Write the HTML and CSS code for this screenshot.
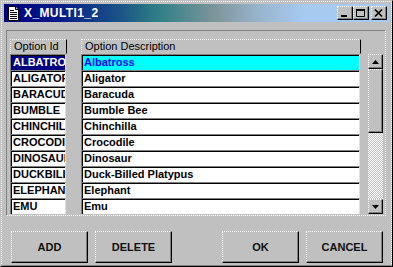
FILE: index.html
```html
<!DOCTYPE html>
<html lang="en">
<head>
    <meta charset="UTF-8">
    <title>X_MULTI1_2</title>
    <link rel="stylesheet" href="styles.css">
</head>
<body>
    <div class="window">
        <div class="frame">
            <div class="titlebar">
                <svg class="app-icon" width="11" height="15" viewBox="0 0 11 15">
                    <path d="M0.5 0.5h7l3 3v11h-10z" fill="#fff" stroke="#000"/>
                    <path d="M7.5 0.5v3h3" fill="#c0c0c0" stroke="#000"/>
                    <path d="M2 4.5h4M2 6.5h7M2 8.5h7M2 10.5h7M2 12.5h7" stroke="#000"/>
                </svg>
                <span class="title">X_MULTI1_2</span>
                <div class="caption-btns">
                    <button class="cap-btn">
                        <svg width="14" height="12" viewBox="0 0 14 12"><rect x="3" y="8" width="6" height="2" fill="#000"/></svg>
                    </button>
                    <button class="cap-btn">
                        <svg width="14" height="12" viewBox="0 0 14 12"><path d="M2.5 2.5h8v7h-8z" fill="none" stroke="#000"/><rect x="2" y="2" width="9" height="2" fill="#000"/></svg>
                    </button>
                    <button class="cap-btn close">
                        <svg width="14" height="12" viewBox="0 0 14 12"><path d="M3 2.5l7 7M10 2.5l-7 7" stroke="#000" stroke-width="1.7"/></svg>
                    </button>
                </div>
            </div>

            <div class="content">
                <div class="panel">
                    <div class="col col-id">
                        <div class="hdr">Option Id</div>
                        <div class="cell sel-id">ALBATROSS</div>
                        <div class="cell">ALIGATOR</div>
                        <div class="cell">BARACUDA</div>
                        <div class="cell">BUMBLE</div>
                        <div class="cell">CHINCHILLA</div>
                        <div class="cell">CROCODILE</div>
                        <div class="cell">DINOSAUR</div>
                        <div class="cell">DUCKBILLED</div>
                        <div class="cell">ELEPHANT</div>
                        <div class="cell">EMU</div>
                    </div>
                    <div class="col col-desc">
                        <div class="hdr">Option Description</div>
                        <div class="cell sel-desc">Albatross</div>
                        <div class="cell">Aligator</div>
                        <div class="cell">Baracuda</div>
                        <div class="cell">Bumble Bee</div>
                        <div class="cell">Chinchilla</div>
                        <div class="cell">Crocodile</div>
                        <div class="cell">Dinosaur</div>
                        <div class="cell">Duck-Billed Platypus</div>
                        <div class="cell">Elephant</div>
                        <div class="cell">Emu</div>
                    </div>
                    <div class="vscroll">
                        <div class="sb-btn">
                            <svg width="7" height="4" viewBox="0 0 7 4"><path d="M3.5 0L7 4H0z" fill="#000"/></svg>
                        </div>
                        <div class="sb-thumb"></div>
                        <div class="sb-track"></div>
                        <div class="sb-btn">
                            <svg width="7" height="4" viewBox="0 0 7 4"><path d="M0 0h7L3.5 4z" fill="#000"/></svg>
                        </div>
                    </div>
                </div>

                <div class="btn-row">
                    <button class="btn">ADD</button>
                    <button class="btn">DELETE</button>
                    <div class="spacer"></div>
                    <button class="btn">OK</button>
                    <button class="btn">CANCEL</button>
                </div>
            </div>
        </div>
    </div>
</body>
</html>
```

FILE: styles.css
```css
:root {
    --face: #c0c0c0;
    --shadow: #808080;
    --dark: #000000;
    --title-start: #000080;
    --title-end: #a6caf0;
}

* {
    margin: 0;
    padding: 0;
    box-sizing: border-box;
}

body {
    font-family: "Liberation Sans", Arial, sans-serif;
    background-color: var(--face);
    color: #000;
}

button {
    font-family: inherit;
    background: var(--face);
    cursor: pointer;
}

/* window frame */
.window {
    width: 393px;
    height: 267px;
    border: 1px solid;
    border-color: var(--face) var(--dark) var(--dark) var(--face);
}

.frame {
    height: 100%;
    padding: 2px;
    border: 1px dotted #fff;
    border-bottom: 1px solid var(--shadow);
}

.titlebar {
    height: 18px;
    display: flex;
    align-items: center;
    padding: 0 2px 0 4px;
    background: linear-gradient(90deg, var(--title-start) 0%, #061a88 14%, #1a5486 30%, #2f7f86 40%, #7e959c 55%, #98b4cc 66%, var(--title-end) 78%);
}

.app-icon {
    display: block;
    margin-right: 5px;
}

.title {
    color: #fff;
    font-size: 12px;
    font-weight: bold;
    letter-spacing: 0.4px;
}

.caption-btns {
    margin-left: auto;
    display: flex;
}

.cap-btn {
    width: 16px;
    height: 14px;
    border-top: 1px dotted #fff;
    border-left: 1px dotted #fff;
    border-right: 1px solid var(--dark);
    border-bottom: 1px solid var(--dark);
    box-shadow: inset -1px -1px var(--shadow);
    display: flex;
    align-items: center;
    justify-content: center;
}

.cap-btn svg {
    display: block;
}

.cap-btn.close {
    margin-left: 2px;
}

/* client area */
.content {
    padding: 8px 0 0 2px;
}

.panel {
    height: 186px;
    width: 380px;
    display: flex;
    padding: 8px 0 0 3px;
    border-top: 1px solid var(--shadow);
    border-left: 1px solid var(--shadow);
    border-right: 1px dotted #fff;
    border-bottom: 1px dotted #fff;
}

.col {
    display: flex;
    flex-direction: column;
}

.col-id {
    width: 57px;
    margin-right: 14px;
}

.col-desc {
    width: 280px;
    margin-right: 7px;
}

.hdr {
    height: 15px;
    font-size: 11px;
    line-height: 13px;
    padding-left: 3px;
    border-top: 1px dotted #fff;
    border-left: 1px dotted #fff;
    border-right: 1px solid var(--dark);
    border-bottom: 1px solid var(--face);
    white-space: nowrap;
}

.cell {
    height: 16px;
    margin-right: 1px;
    background: #fff;
    font-size: 11px;
    font-weight: bold;
    line-height: 14px;
    padding-left: 2px;
    white-space: nowrap;
    overflow: hidden;
    border-top: 1px solid var(--shadow);
    border-left: 1px solid var(--shadow);
    border-right: 1px solid #dfdfdf;
    box-shadow: inset 1px 1px var(--dark);
}

.sel-id {
    background: var(--title-start);
    color: #fff;
}

.sel-desc {
    background: #00ffff;
    color: #0000ff;
}

/* vertical scrollbar */
.vscroll {
    width: 15px;
    margin-top: 15px;
    height: 160px;
    display: flex;
    flex-direction: column;
}

.sb-btn {
    height: 15px;
    display: flex;
    align-items: center;
    justify-content: center;
    border-top: 1px dotted #fff;
    border-left: 1px dotted #fff;
    border-right: 1px solid var(--dark);
    border-bottom: 1px solid var(--dark);
    box-shadow: inset -1px -1px var(--shadow);
}

.sb-btn svg {
    display: block;
}

.sb-thumb {
    height: 64px;
    border-top: 1px dotted #fff;
    border-left: 1px dotted #fff;
    border-right: 1px solid var(--dark);
    border-bottom: 1px solid var(--dark);
    box-shadow: inset -1px -1px var(--shadow);
}

.sb-track {
    flex: 1;
    background: repeating-conic-gradient(#fff 0 25%, var(--face) 0 50%) 0 0 / 2px 2px;
}

/* bottom buttons */
.btn-row {
    display: flex;
    margin-top: 15px;
    padding: 0 6px 0 5px;
}

.btn {
    width: 77px;
    height: 32px;
    font-size: 11px;
    font-weight: bold;
    color: #111;
    border-top: 1px dotted #fff;
    border-left: 1px dotted #fff;
    border-right: 1px solid var(--dark);
    border-bottom: 1px solid var(--dark);
    box-shadow: inset -1px -1px var(--shadow);
}

.btn + .btn {
    margin-left: 7px;
}

.spacer {
    flex: 1;
}
```
